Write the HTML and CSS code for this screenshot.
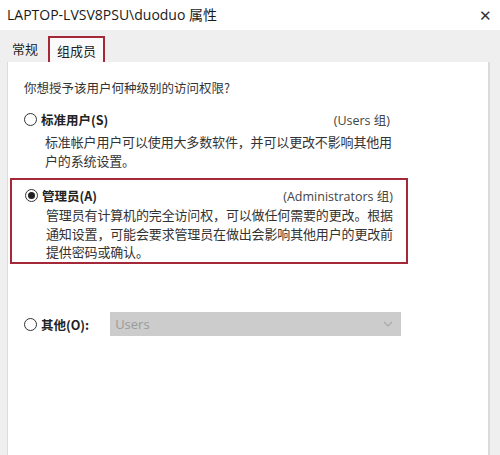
FILE: index.html
```html
<!DOCTYPE html>
<html lang="zh-CN">
<head>
    <meta charset="UTF-8">
    <title>LAPTOP-LVSV8PSU\duoduo 属性</title>
    <link rel="stylesheet" href="styles.css">
</head>
<body>
    <div class="titlebar">
        <span class="title">LAPTOP-LVSV8PSU\duoduo 属性</span>
        <span class="close">✕</span>
    </div>

    <div class="tabs">
        <div class="tab">常规</div>
        <div class="tab active">组成员</div>
    </div>

    <div class="panel">
        <p class="question">你想授予该用户何种级别的访问权限?</p>

        <div class="option">
            <div class="option-head">
                <span class="radio"></span>
                <span class="label">标准用户(S)</span>
                <span class="group">(Users 组)</span>
            </div>
            <div class="desc">标准帐户用户可以使用大多数软件，并可以更改不影响其他用户的系统设置。</div>
        </div>

        <div class="option highlight">
            <div class="option-head">
                <span class="radio checked"></span>
                <span class="label">管理员(A)</span>
                <span class="group">(Administrators 组)</span>
            </div>
            <div class="desc">管理员有计算机的完全访问权，可以做任何需要的更改。根据通知设置，可能会要求管理员在做出会影响其他用户的更改前提供密码或确认。</div>
        </div>

        <div class="other">
            <span class="radio"></span>
            <span class="label">其他(O):</span>
            <div class="select">
                <span>Users</span>
                <svg width="10" height="6" viewBox="0 0 10 6"><path d="M1 1 L5 5 L9 1" fill="none" stroke="#a8a8a8" stroke-width="1.2"/></svg>
            </div>
        </div>
    </div>
</body>
</html>
```

FILE: styles.css
```css
* {
    box-sizing: border-box;
}

body {
    margin: 0;
    width: 500px;
    height: 455px;
    overflow: hidden;
    background-color: #efefef;
    font-family: "Noto Sans CJK SC", "Open Sans", sans-serif;
    color: #222;
}

.titlebar {
    height: 30px;
    background-color: #fff;
    display: flex;
    align-items: center;
    justify-content: space-between;
    padding: 0 8px 2px 7px;
}

.title {
    font-family: "Open Sans", "Noto Sans CJK SC", sans-serif;
    font-size: 14px;
    color: #1a1a1a;
}

.close {
    font-size: 15px;
    color: #333;
}

.tabs {
    height: 32px;
    display: flex;
    align-items: flex-end;
    padding-left: 7px;
}

.tab {
    font-size: 13px;
    padding: 0 5px 4px 5px;
    color: #222;
}

.tab.active {
    margin-left: 5px;
    height: 26px;
    padding: 3px 7px 0 7px;
    border: 2px solid #a52838;
    border-bottom: none;
    background-color: #fafafa;
}

.panel {
    margin: 0 10px 0 7px;
    height: 400px;
    background-color: #fff;
    border-left: 1px solid #dcdcdc;
    border-right: 2px solid #dadada;
    padding: 17px 0 0 0;
    font-size: 12.5px;
}

.question {
    margin: 0 0 0 16px;
    line-height: 18px;
    color: #333;
}

.option {
    margin: 11px 96px 0 3px;
    padding: 0 0 0 13px;
}

.option-head {
    display: flex;
    align-items: center;
    height: 22px;
}

.label {
    font-weight: bold;
    margin-left: 4px;
    color: #222;
}

.group {
    margin-left: auto;
    font-family: "Open Sans", "Noto Sans CJK SC", sans-serif;
    color: #444;
    margin-right: 2px;
}

.desc {
    margin: 3px 0 0 21px;
    width: 352px;
    font-size: 13px;
    letter-spacing: -0.15px;
    line-height: 18.5px;
    color: #333;
}

.radio {
    width: 13px;
    height: 13px;
    border: 1px solid #333;
    border-radius: 50%;
    background-color: #fff;
    display: inline-flex;
    align-items: center;
    justify-content: center;
}

.radio.checked::after {
    content: "";
    width: 7px;
    height: 7px;
    border-radius: 50%;
    background-color: #222;
}

.option.highlight {
    margin: 8px 80px 0 2px;
    padding: 4px 11px 0 13px;
    border: 2px solid #a52838;
    height: 86px;
}

.option.highlight .desc {
    margin-top: 0;
}

.other {
    display: flex;
    align-items: center;
    margin: 48px 0 0 16px;
}

.select {
    margin-left: 21px;
    width: 291px;
    height: 24px;
    background-color: #cccccc;
    display: flex;
    align-items: center;
    justify-content: space-between;
    padding: 0 8px 0 5px;
    font-family: "Open Sans", sans-serif;
    font-size: 13px;
    color: #9a9a9a;
}
```
